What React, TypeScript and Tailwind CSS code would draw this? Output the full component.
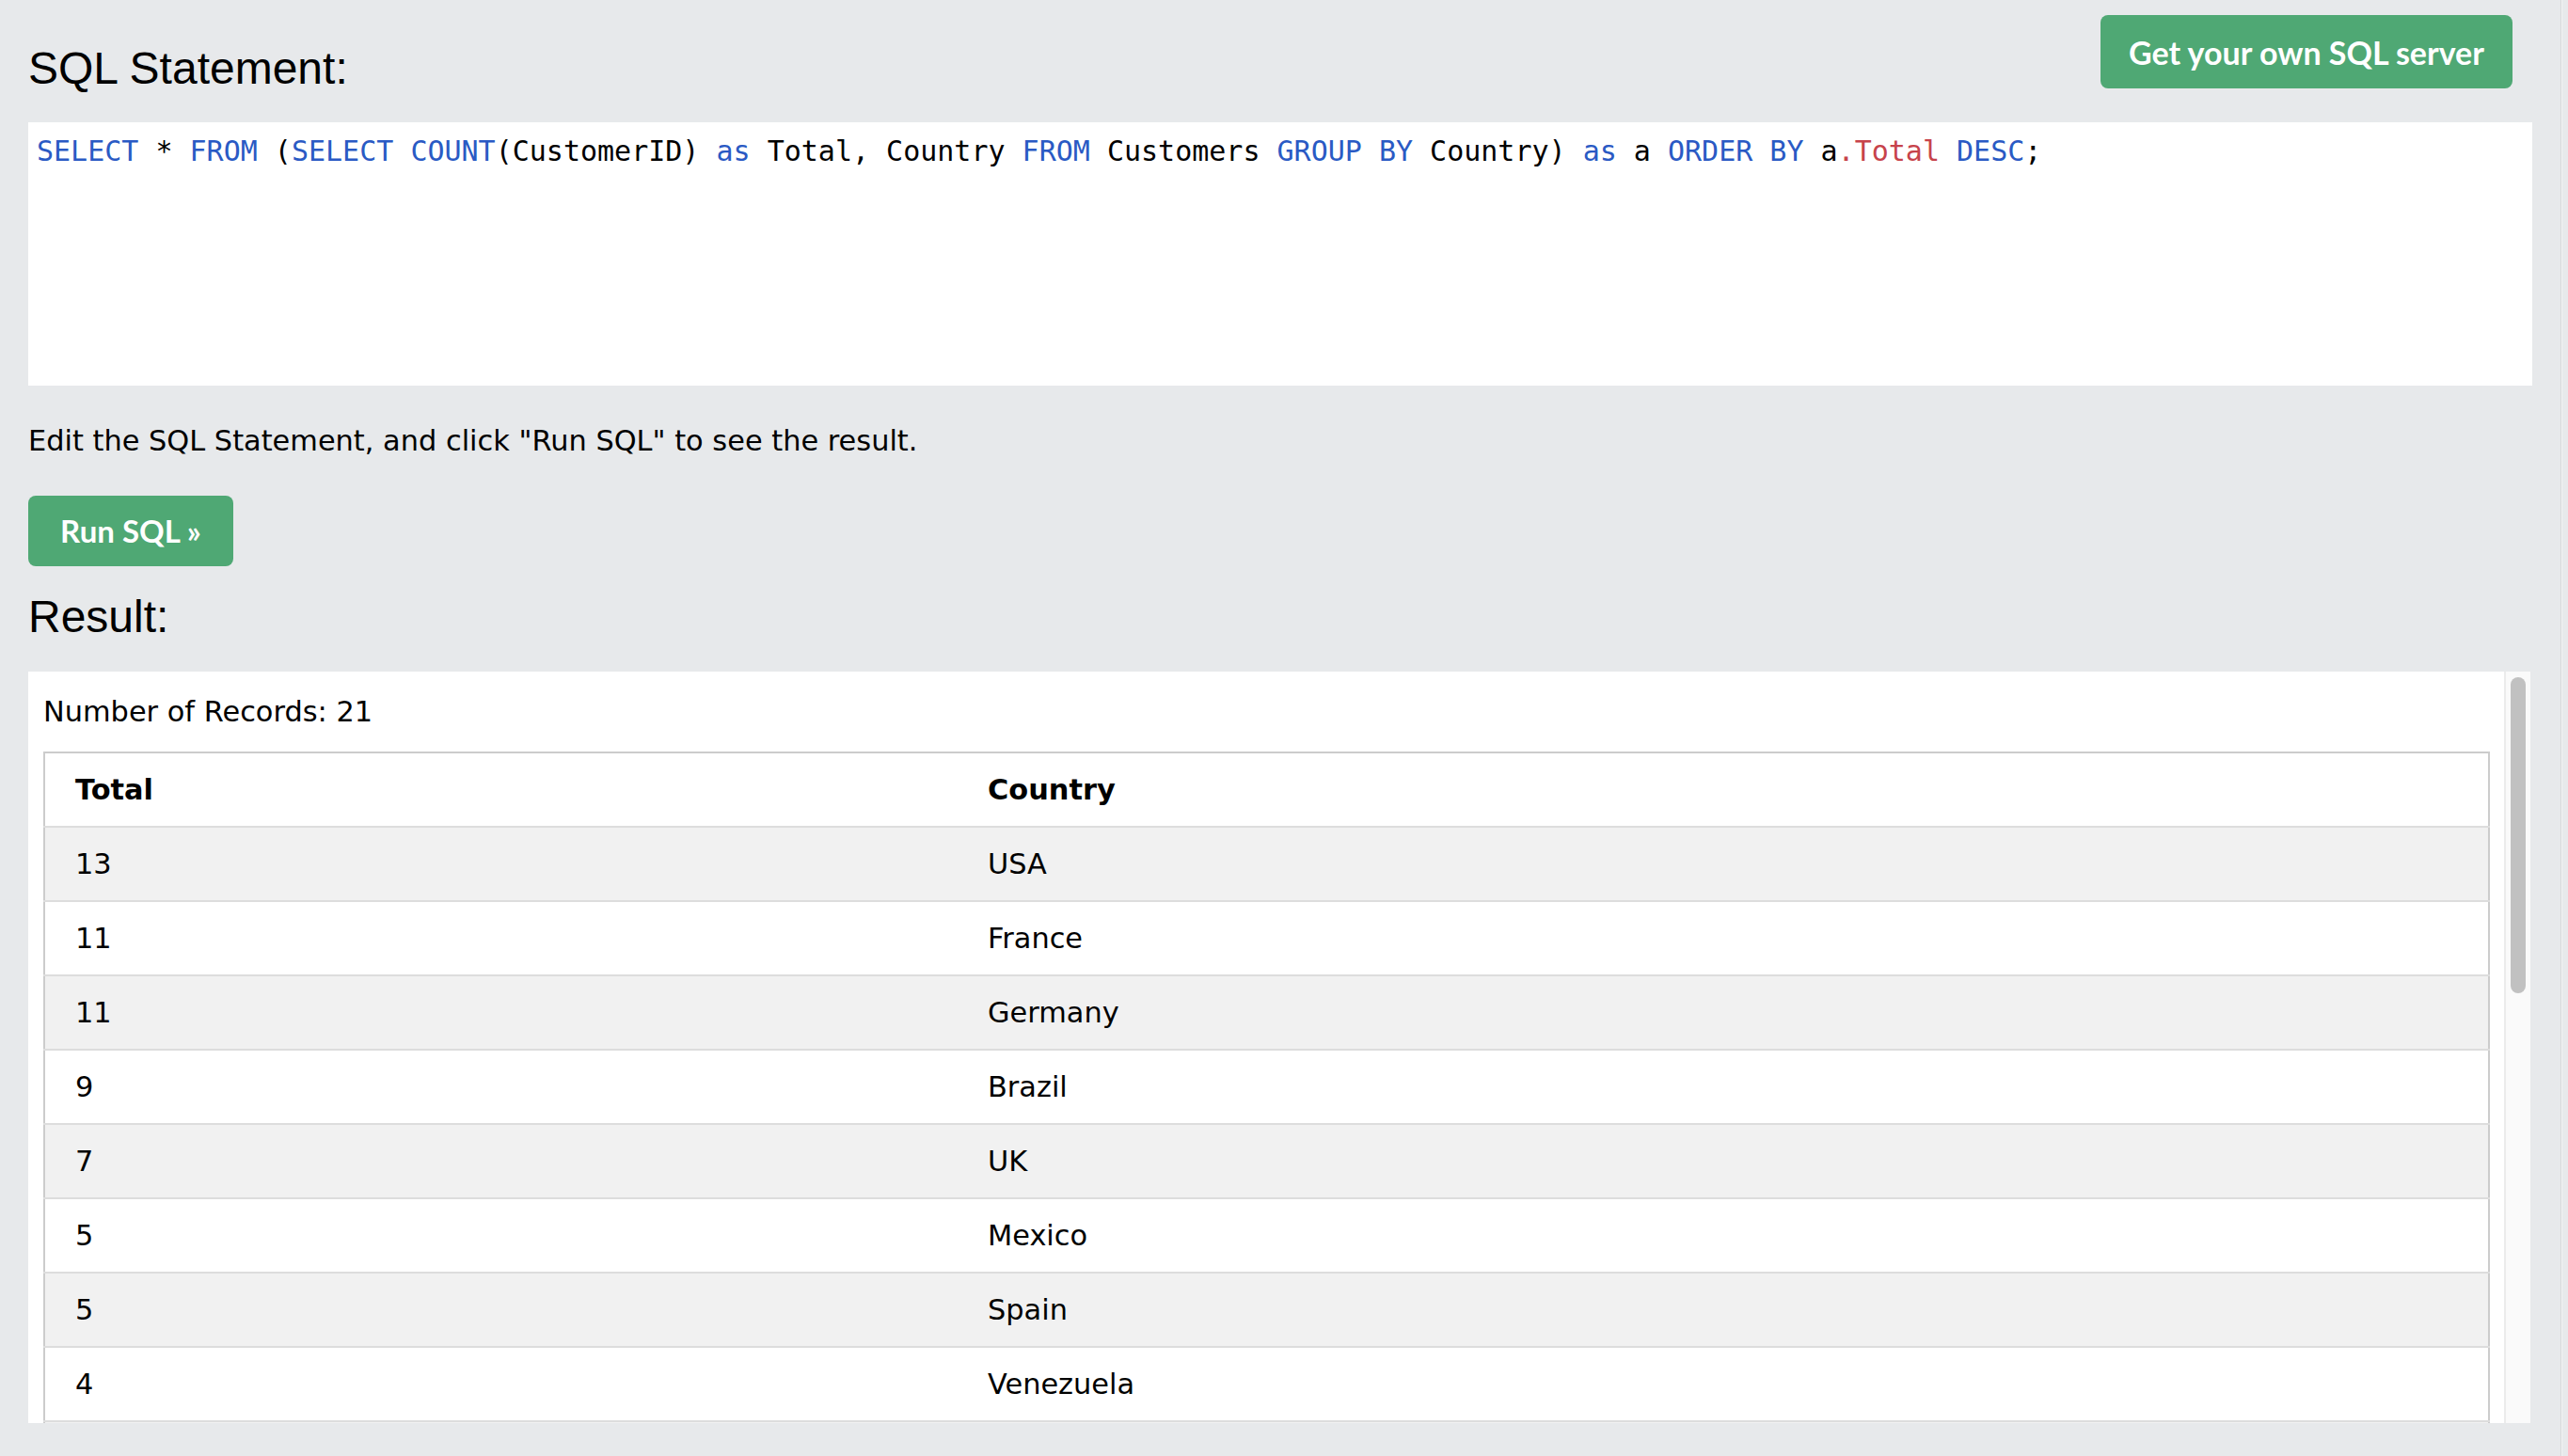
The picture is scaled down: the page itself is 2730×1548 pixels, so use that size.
import React from "react";

const rows: [number, string][] = [
  [13, "USA"],
  [11, "France"],
  [11, "Germany"],
  [9, "Brazil"],
  [7, "UK"],
  [5, "Mexico"],
  [5, "Spain"],
  [4, "Venezuela"],
  [3, "Argentina"],
  [3, "Italy"],
  [3, "Canada"],
  [2, "Belgium"],
  [2, "Denmark"],
  [2, "Finland"],
  [2, "Portugal"],
  [2, "Sweden"],
  [2, "Switzerland"],
  [2, "Austria"],
  [1, "Ireland"],
  [1, "Norway"],
  [1, "Poland"],
];

const K = ({ children }: { children: React.ReactNode }) => (
  <span className="text-[#2a5ac4]">{children}</span>
);
const R = ({ children }: { children: React.ReactNode }) => (
  <span className="text-[#c7434b]">{children}</span>
);

export default function App() {
  return (
    <div className="w-[2730px] h-[1548px] bg-[#e7e9eb] flex overflow-hidden">
      <div className="w-[2722px] pl-[30px] pr-[30px] flex flex-col">
        {/* header row */}
        <div className="flex justify-between items-start h-[130px]">
          <h2 className="mt-[49px] text-[48px] leading-none font-normal text-black [font-family:'Liberation_Sans',Arial,sans-serif]">
            SQL Statement:
          </h2>
          <button className="mt-[16px] mr-[21px] w-[438px] h-[78px] rounded-[8px] bg-[#4fa874] text-white text-[34px] font-bold [font-family:Lato,sans-serif] flex items-center justify-center">
            Get your own SQL server
          </button>
        </div>
        {/* code box */}
        <div className="h-[280px] bg-white pl-[9px] pt-[16px] text-[30px] leading-[30px] text-black whitespace-pre [font-family:'DejaVu_Sans_Mono',monospace]">
          <K>SELECT</K> * <K>FROM</K> (<K>SELECT</K> <K>COUNT</K>(CustomerID) <K>as</K> Total, Country <K>FROM</K> Customers <K>GROUP</K> <K>BY</K> Country) <K>as</K> a <K>ORDER</K> <K>BY</K> a<R>.Total</R> <K>DESC</K>;
        </div>
        <p className="mt-[44px] text-[30.4px] leading-[30px] text-black [font-family:'DejaVu_Sans',Verdana,sans-serif]">
          Edit the SQL Statement, and click "Run SQL" to see the result.
        </p>
        <div className="mt-[43px]">
          <button className="w-[218px] h-[75px] rounded-[8px] bg-[#4fa874] text-white text-[33px] font-bold [font-family:Lato,sans-serif] flex items-center justify-center">
            Run SQL »
          </button>
        </div>
        <h2 className="mt-[30px] text-[48px] leading-none font-normal text-black [font-family:'Liberation_Sans',Arial,sans-serif]">
          Result:
        </h2>
        {/* result box */}
        <div className="mt-[34px] mr-[2px] h-[799px] bg-white flex overflow-hidden">
          <div className="flex-1 pl-[16px] pr-[15px] pt-[28px] overflow-hidden [font-family:'DejaVu_Sans',Verdana,sans-serif] text-[30.4px] text-black">
            <div className="leading-[30px]">Number of Records: 21</div>
            <table className="mt-[27px] w-full table-fixed border-collapse border-2 border-[#cccccc]">
              <colgroup>
                <col className="w-[971px]" />
                <col />
              </colgroup>
              <thead>
                <tr className="border-b-2 border-[#dddddd] bg-white">
                  <th className="h-[79px] pl-[32px] text-left font-bold align-middle">Total</th>
                  <th className="h-[79px] pl-[32px] text-left font-bold align-middle">Country</th>
                </tr>
              </thead>
              <tbody>
                {rows.map(([n, c], i) => (
                  <tr
                    key={i}
                    className={`border-b-2 border-[#dddddd] ${i % 2 === 0 ? "bg-[#f1f1f1]" : "bg-white"}`}
                  >
                    <td className="h-[79px] pl-[32px] align-middle">{n}</td>
                    <td className="h-[79px] pl-[32px] align-middle">{c}</td>
                  </tr>
                ))}
              </tbody>
            </table>
          </div>
          {/* scrollbar */}
          <div className="w-[28px] flex">
            <div className="w-[2px] bg-[#ebebeb]" />
            <div className="flex-1 bg-[#fafafa] pt-[6px] flex justify-center">
              <div className="w-[16px] h-[336px] rounded-full bg-[#c1c1c1]" />
            </div>
          </div>
        </div>
      </div>
      <div className="w-[1px] bg-[#d6d8da]" />
      <div className="w-[1px] bg-[#f3f3f3]" />
      <div className="flex-1" />
    </div>
  );
}
